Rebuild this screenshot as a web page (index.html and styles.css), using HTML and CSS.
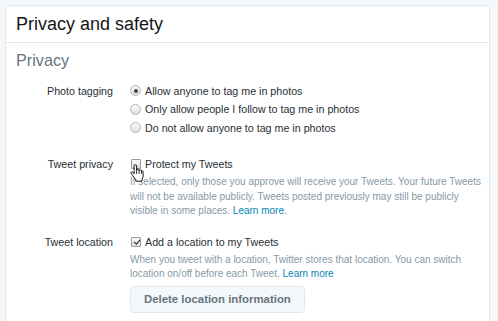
FILE: index.html
```html
<!DOCTYPE html>
<html lang="en">
<head>
    <meta charset="UTF-8">
    <title>Privacy and safety</title>
    <link rel="stylesheet" href="styles.css">
</head>
<body>
    <div class="settings-card">
        <div class="card-header">
            <h1>Privacy and safety</h1>
        </div>
        <div class="card-body">
            <h2>Privacy</h2>

            <!-- Photo tagging -->
            <div class="setting-row first">
                <div class="setting-label">Photo tagging</div>
                <div class="setting-control">
                    <label class="option"><input type="radio" name="tagging" checked> Allow anyone to tag me in photos</label>
                    <label class="option"><input type="radio" name="tagging"> Only allow people I follow to tag me in photos</label>
                    <label class="option"><input type="radio" name="tagging"> Do not allow anyone to tag me in photos</label>
                </div>
            </div>

            <!-- Tweet privacy -->
            <div class="setting-row privacy">
                <div class="setting-label">Tweet privacy</div>
                <div class="setting-control">
                    <label class="option has-cursor"><input type="checkbox"> Protect my Tweets
                        <svg class="hand-cursor" viewBox="0 0 17 22" width="14" height="18">
                            <path d="M5 11V2.2Q5 1 6.5 1T8 2.2V7.5Q8 6.3 9.5 6.3T11 7.5V8.3Q11 7.2 12.5 7.2T14 8.3V9.2Q14 8.3 15 8.3T16 9.2V14.5Q16 17 14.5 19V21H7V19Q5.5 17.5 3.5 14.5L1.2 11.2Q0.6 10.2 1.6 9.7T3.6 10.3L5 12Z" fill="#fff" stroke="#000" stroke-width="1.1" stroke-linejoin="round"/>
                            <path d="M8 7.5V12M11 8.3V12M14 9.2V12" stroke="#000" stroke-width="1" fill="none"/>
                        </svg>
                    </label>
                    <p class="help-text">If selected, only those you approve will receive your Tweets. Your future Tweets will not be available publicly. Tweets posted previously may still be publicly visible in some places. <a href="#">Learn more</a>.</p>
                </div>
            </div>

            <!-- Tweet location -->
            <div class="setting-row location">
                <div class="setting-label">Tweet location</div>
                <div class="setting-control">
                    <label class="option"><input type="checkbox" checked> Add a location to my Tweets</label>
                    <p class="help-text">When you tweet with a location, Twitter stores that location. You can switch location on/off before each Tweet. <a href="#">Learn more</a></p>
                    <button type="button" class="btn">Delete location information</button>
                </div>
            </div>
        </div>
    </div>
</body>
</html>
```

FILE: styles.css
```css
:root {
    --text-color: #292f33;
    --muted-color: #66757f;
    --help-color: #8899a6;
    --link-color: #0084b4;
    --border-color: #e1e8ed;
    --background-color: #f5f8fa;
}

body {
    font-family: 'Liberation Sans', Arial, sans-serif;
    background-color: var(--background-color);
    margin: 0;
    padding: 5px 8px 0 5px;
    color: var(--text-color);
    font-size: 10.7px;
}

.settings-card {
    background-color: white;
    border: 1px solid var(--border-color);
    border-radius: 5px;
    min-height: 330px;
}

.card-header {
    border-bottom: 1px solid var(--border-color);
    padding: 0 10px;
}

h1 {
    margin: 0;
    font-size: 18px;
    font-weight: normal;
    line-height: 36px;
    color: #14171a;
}

.card-body {
    padding-top: 6.5px;
}

h2 {
    margin: 0 0 0 10px;
    font-size: 16.2px;
    font-weight: normal;
    line-height: 20px;
    color: var(--muted-color);
}

.setting-row {
    display: flex;
    align-items: flex-start;
}

.setting-row.first {
    margin-top: 12px;
}

.setting-row.privacy {
    margin-top: 17.5px;
}

.setting-row.location {
    margin-top: 14px;
}

.setting-label {
    width: 107px;
    text-align: right;
    line-height: 18.5px;
}

.setting-control {
    margin-left: 17px;
    width: 352px;
}

.option {
    display: flex;
    align-items: center;
    line-height: 18.5px;
}

.option.has-cursor {
    position: relative;
}

input[type="radio"],
input[type="checkbox"] {
    appearance: none;
    margin: 0 4px 0 0;
    width: 11px;
    height: 11px;
    border: 1px solid #b4b4b4;
    background: linear-gradient(#fbfbfb, #dedede);
    position: relative;
    flex-shrink: 0;
}

input[type="radio"] {
    border-radius: 50%;
}

input[type="radio"]:checked::after {
    content: "";
    position: absolute;
    left: 2.5px;
    top: 2.5px;
    width: 4px;
    height: 4px;
    border-radius: 50%;
    background-color: #444;
}

input[type="checkbox"] {
    width: 10px;
    height: 10px;
    margin-left: 1px;
    border-color: #9a9a9a;
    border-radius: 1px;
}

input[type="checkbox"]:checked::after {
    content: "";
    position: absolute;
    left: 2.5px;
    top: 0;
    width: 2.5px;
    height: 5px;
    border: solid #222;
    border-width: 0 1.5px 1.5px 0;
    transform: rotate(40deg);
}

.hand-cursor {
    position: absolute;
    left: -0.5px;
    top: 9.5px;
}

.help-text {
    margin: 2px 0 0;
    font-size: 10px;
    line-height: 14.5px;
    color: var(--help-color);
}

.help-text a {
    color: var(--link-color);
    text-decoration: none;
}

.location .help-text {
    margin-top: 1.5px;
}

.btn {
    margin-top: 4px;
    background-color: var(--background-color);
    border: 1px solid var(--border-color);
    border-radius: 4px;
    padding: 0 13px;
    height: 27px;
    font-family: inherit;
    font-size: 11.4px;
    font-weight: bold;
    color: var(--muted-color);
    cursor: pointer;
}
```
